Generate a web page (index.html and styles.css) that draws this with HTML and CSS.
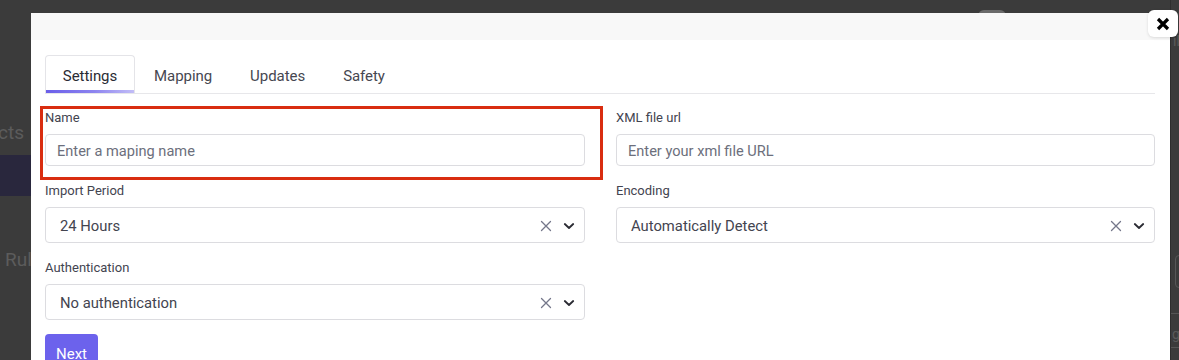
FILE: index.html
```html
<!DOCTYPE html>
<html>
<head>
<meta charset="utf-8">
<link rel="stylesheet" href="styles.css">
</head>
<body>
<div class="screen">
  <aside class="left-strip">
    <div class="ghost-text ghost-cts">cts</div>
    <div class="ghost-bar"></div>
    <div class="ghost-text ghost-rul">Rul</div>
  </aside>

  <div class="modal">
    <div class="modal-head"></div>
    <div class="modal-body">
      <nav class="tabs">
        <div class="tab active">Settings</div>
        <div class="tab">Mapping</div>
        <div class="tab">Updates</div>
        <div class="tab">Safety</div>
      </nav>

      <form class="form">
        <div class="field highlighted">
          <label class="label">Name</label>
          <div class="input placeholder">Enter a maping name</div>
          <span class="annot"></span>
        </div>
        <div class="field">
          <label class="label">XML file url</label>
          <div class="input placeholder">Enter your xml file URL</div>
        </div>
        <div class="field">
          <label class="label">Import Period</label>
          <div class="select">
            <span class="value">24 Hours</span>
            <span class="icons">
              <svg class="clear" width="12" height="12" viewBox="0 0 12 12"><path d="M1.5 1.5 L10.5 10.5 M10.5 1.5 L1.5 10.5" stroke="#74778a" stroke-width="1.3" fill="none" stroke-linecap="round"/></svg>
              <svg class="chev" width="12" height="12" viewBox="0 0 12 12"><path d="M1.8 4 L6 8 L10.2 4" stroke="#2a2b33" stroke-width="1.8" fill="none" stroke-linecap="round" stroke-linejoin="round"/></svg>
            </span>
          </div>
        </div>
        <div class="field">
          <label class="label">Encoding</label>
          <div class="select">
            <span class="value">Automatically Detect</span>
            <span class="icons">
              <svg class="clear" width="12" height="12" viewBox="0 0 12 12"><path d="M1.5 1.5 L10.5 10.5 M10.5 1.5 L1.5 10.5" stroke="#74778a" stroke-width="1.3" fill="none" stroke-linecap="round"/></svg>
              <svg class="chev" width="12" height="12" viewBox="0 0 12 12"><path d="M1.8 4 L6 8 L10.2 4" stroke="#2a2b33" stroke-width="1.8" fill="none" stroke-linecap="round" stroke-linejoin="round"/></svg>
            </span>
          </div>
        </div>
        <div class="field">
          <label class="label">Authentication</label>
          <div class="select">
            <span class="value">No authentication</span>
            <span class="icons">
              <svg class="clear" width="12" height="12" viewBox="0 0 12 12"><path d="M1.5 1.5 L10.5 10.5 M10.5 1.5 L1.5 10.5" stroke="#74778a" stroke-width="1.3" fill="none" stroke-linecap="round"/></svg>
              <svg class="chev" width="12" height="12" viewBox="0 0 12 12"><path d="M1.8 4 L6 8 L10.2 4" stroke="#2a2b33" stroke-width="1.8" fill="none" stroke-linecap="round" stroke-linejoin="round"/></svg>
            </span>
          </div>
        </div>
      </form>

      <div class="actions">
        <button class="btn-next" type="button">Next</button>
      </div>
    </div>
    <button class="close" type="button" aria-label="Close">
      <svg width="14" height="14" viewBox="0 0 14 14"><path d="M2 2 L12 12 M12 2 L2 12" stroke="#000" stroke-width="3.2" stroke-linecap="butt"/></svg>
    </button>
  </div>

  <aside class="right-strip">
    <div class="ghost-il">il</div>
    <div class="ghost-box"></div>
    <div class="ghost-line l1"></div>
    <div class="ghost-g">g</div>
    <div class="ghost-line l2"></div>
  </aside>
  <div class="ghost-bump"></div>
</div>
</body>
</html>
```

FILE: styles.css
```css
* { box-sizing: border-box; }
html, body {
  margin: 0;
  padding: 0;
  height: 360px;
  overflow: hidden;
  background: #3b3b3b;
  font-family: Roboto, Inter, "Liberation Sans", Arial, sans-serif;
}

.screen {
  position: relative;
  display: flex;
  height: 360px;
  overflow: hidden;
}

/* ---- dimmed page behind ---- */
.left-strip {
  width: 31px;
  flex: none;
  display: flex;
  flex-direction: column;
  overflow: hidden;
}
.ghost-text {
  color: #5c5c5c;
  font-size: 19px;
  line-height: 22px;
  white-space: nowrap;
}
.ghost-cts {
  margin-top: 122px;
  margin-left: -2px;
}
.ghost-bar {
  margin-top: 11px;
  height: 41px;
  background: #29273d;
}
.ghost-rul {
  margin-top: 53px;
  margin-left: 5px;
}

.right-strip {
  flex: 1;
  display: flex;
  flex-direction: column;
  overflow: hidden;
  border-left: 1px solid #2e2e2e;
}
.ghost-il {
  margin-top: 33px;
  margin-left: 2px;
  color: #5a5a5a;
  font-size: 14px;
  line-height: 16px;
}
.ghost-box {
  margin-top: 206px;
  margin-left: 4px;
  height: 33px;
  width: 20px;
  border: 1px solid #575757;
  border-radius: 4px;
}
.ghost-line {
  height: 1px;
  background: #555;
}
.l1 { margin-top: 25px; }
.ghost-g {
  margin-top: 12px;
  margin-left: 1px;
  color: #5a5a5a;
  font-size: 14px;
  line-height: 16px;
}
.l2 { margin-top: 5px; }

.ghost-bump {
  position: absolute;
  left: 978px;
  top: 10px;
  width: 28px;
  height: 6px;
  border-radius: 6px 6px 0 0;
  background: #6a6a6a;
}

/* ---- modal ---- */
.modal {
  position: relative;
  width: 1139px;
  flex: none;
  margin-top: 13px;
  background: #fff;
  align-self: flex-start;
  min-height: 400px;
  z-index: 1;
}
.modal-head {
  height: 27px;
  background: #f8f8f8;
}
.modal-body {
  padding: 15px 15px 0 14px;
}

.close {
  position: absolute;
  top: -3px;
  right: -8px;
  width: 30px;
  height: 27px;
  border: none;
  border-radius: 6px;
  background: #fff;
  box-shadow: 0 1px 3px rgba(0,0,0,0.12);
  display: flex;
  align-items: center;
  justify-content: center;
  padding: 0;
}

/* ---- tabs ---- */
.tabs {
  display: flex;
  border-bottom: 1px solid #e7e7ea;
  height: 39px;
}
.tab {
  height: 38px;
  padding: 2px 18px 0;
  display: flex;
  align-items: center;
  font-size: 15px;
  letter-spacing: -0.05px;
  color: #464751;
  border: 1px solid transparent;
  border-bottom: none;
  border-radius: 4px 4px 0 0;
  position: relative;
}
.tab.active {
  color: #2a2b33;
  border-color: #e4e4e8;
  width: 90px;
  justify-content: center;
  padding: 2px 0 0;
}
.tab.active::after {
  content: "";
  position: absolute;
  left: 0;
  right: 0;
  bottom: 0;
  height: 3px;
  background: linear-gradient(90deg, #6a5ee9 0%, #8d84ef 55%, #c2bdf7 100%);
}

/* ---- form ---- */
.form {
  display: grid;
  grid-template-columns: 540px 539px;
  column-gap: 31px;
  row-gap: 16px;
  margin-top: 15px;
}
.field {
  position: relative;
  display: flex;
  flex-direction: column;
}
.label {
  font-size: 13px;
  line-height: 18px;
  color: #434450;
  margin-bottom: 7px;
}
.input {
  height: 32px;
  border: 1px solid #dcdce0;
  border-radius: 4px;
  padding: 1px 11px 0;
  display: flex;
  align-items: center;
  font-size: 14.6px;
}
.placeholder { color: #6c6f7c; }

.select {
  height: 36px;
  border: 1px solid #dcdce0;
  border-radius: 4px;
  padding: 1px 9px 0 14px;
  display: flex;
  align-items: center;
  justify-content: space-between;
  font-size: 14.8px;
  color: #43444f;
}
.icons {
  display: flex;
  align-items: center;
  gap: 11px;
}

.annot {
  position: absolute;
  left: -5px;
  top: -3px;
  width: 563px;
  height: 74px;
  border: 3px solid #d92d10;
  pointer-events: none;
}

.actions {
  margin-top: 14px;
}
.btn-next {
  height: 32px;
  padding: 4px 11px 0;
  border: none;
  border-radius: 4px;
  background: #6c62ec;
  color: #fff;
  font-family: inherit;
  font-size: 15px;
  line-height: 32px;
}
```
